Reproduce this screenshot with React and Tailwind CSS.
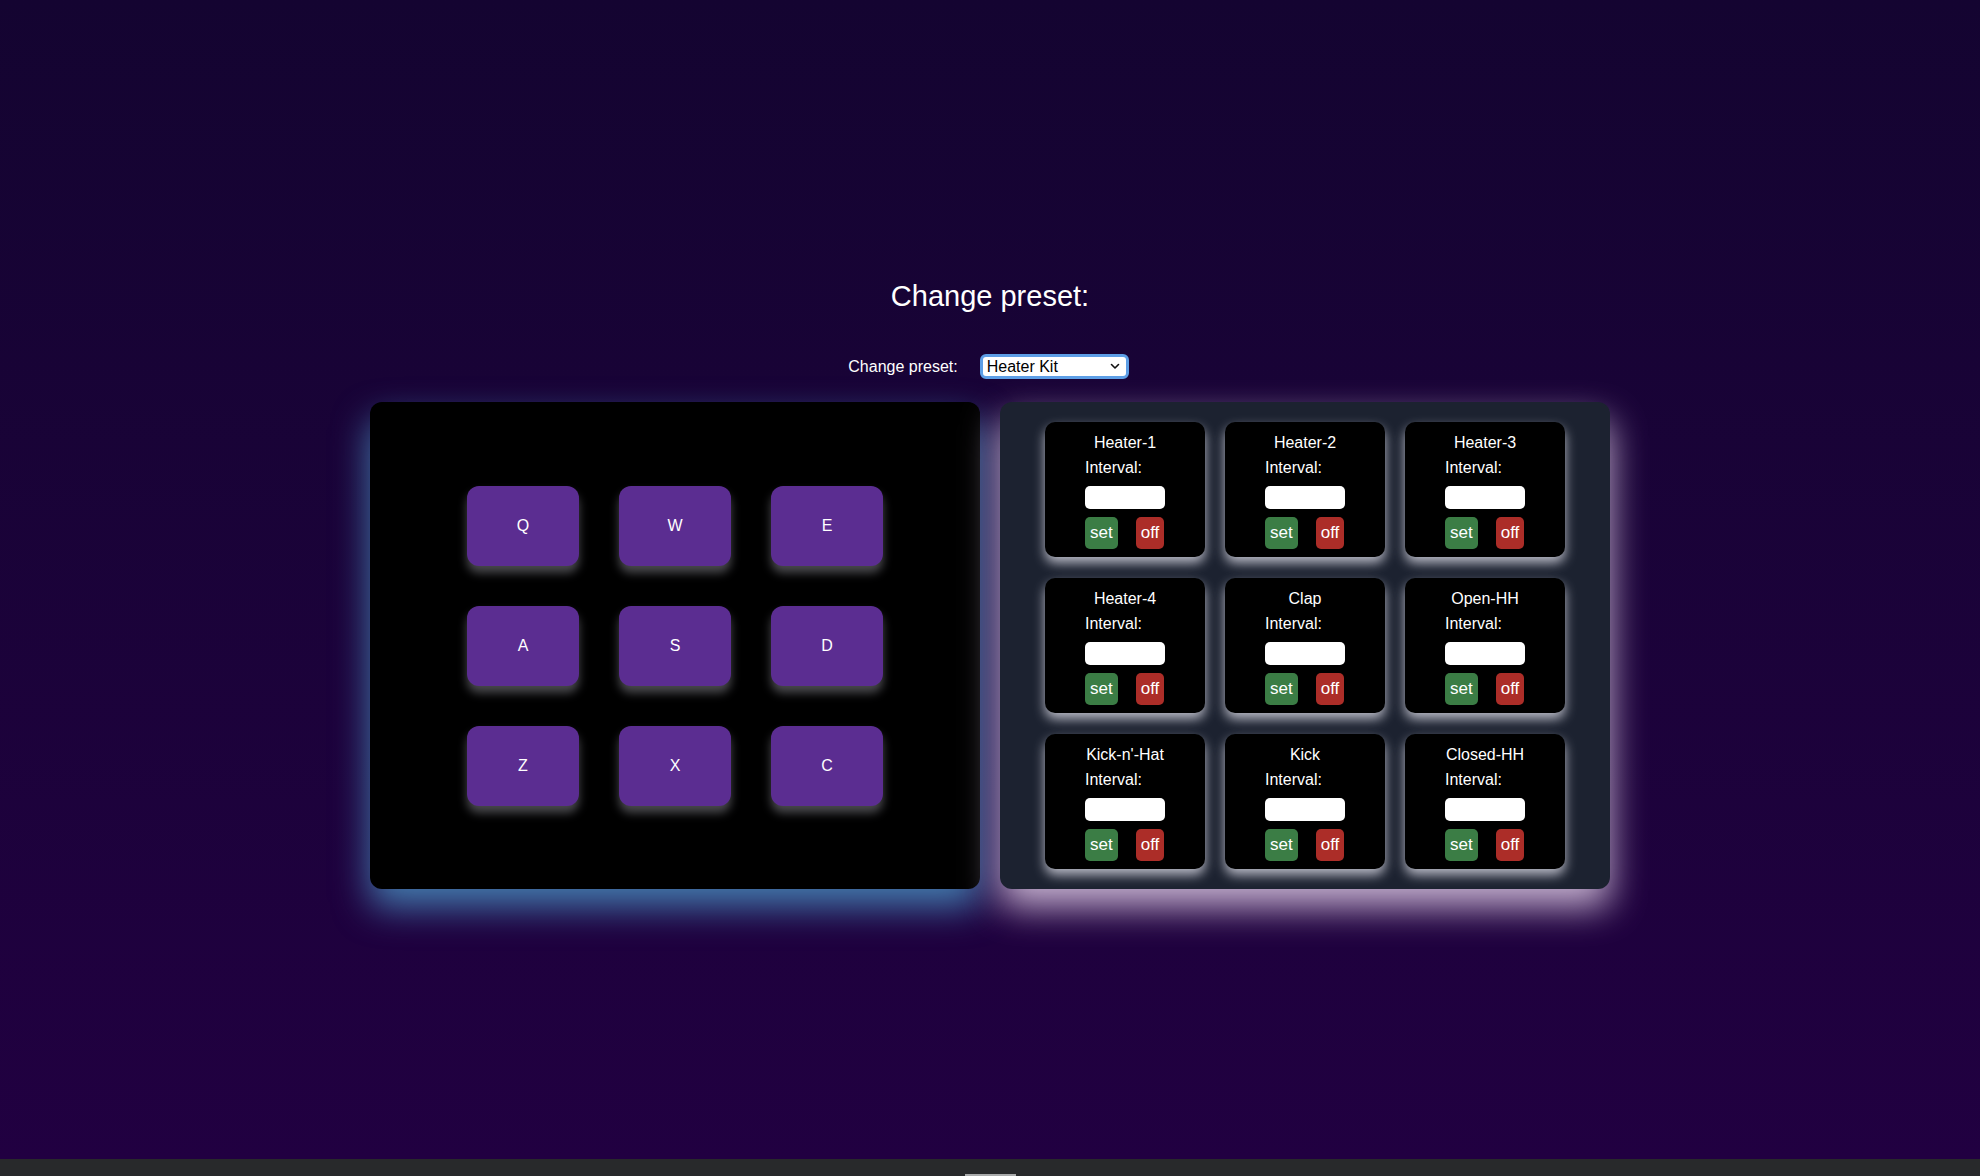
import React from 'react';

const keys = ['Q', 'W', 'E', 'A', 'S', 'D', 'Z', 'X', 'C'];

const pads = [
  'Heater-1', 'Heater-2', 'Heater-3',
  'Heater-4', 'Clap', 'Open-HH',
  "Kick-n'-Hat", 'Kick', 'Closed-HH',
];

const PadCard = ({ name }) => (
  <div className="w-[160px] h-[135px] bg-black rounded-[10px] pt-[11px] flex flex-col items-center shadow-[0_6px_12px_rgba(235,235,245,0.75)]">
    <div className="text-[16px] leading-[20px] text-white">{name}</div>
    <div className="w-[80px] flex flex-col">
      <div className="mt-[5px] text-[16px] leading-[20px] text-white">Interval:</div>
      <div className="mt-[8px] h-[23px] w-[80px] bg-white rounded-[5px]" />
      <div className="mt-[8px] flex gap-[18px]">
        <button className="px-[5px] py-[6px] text-[17px] leading-[20px] text-white bg-[#3b7d45] rounded-[5px]">set</button>
        <button className="px-[5px] py-[6px] text-[17px] leading-[20px] text-white bg-[#ac2d28] rounded-[5px]">off</button>
      </div>
    </div>
  </div>
);

const App = () => {
  return (
    <div className="w-[1980px] h-[1176px] flex flex-col overflow-hidden font-['Liberation_Sans',Arial,sans-serif]">
      <div className="h-[1159px] bg-linear-to-b from-[#140431] to-[#210041] flex flex-col items-center pt-[279px]">
        <h1 className="text-[29px] leading-[34px] text-white">Change preset:</h1>

        <div className="mt-[41px] flex items-center gap-[22px] ml-[-3px]">
          <span className="text-[16px] text-white">Change preset:</span>
          <div className="w-[149px] h-[25px] rounded-[6px] bg-white border-[3px] border-[#5d9ee6] flex items-center justify-between pl-[4px] pr-[6px]">
            <span className="text-[16px] leading-[18px] text-black">Heater Kit</span>
            <svg width="10" height="7" viewBox="0 0 10 7" fill="none">
              <path d="M1.5 1.5 L5 5 L8.5 1.5" stroke="#111" strokeWidth="1.6" strokeLinecap="round" strokeLinejoin="round" />
            </svg>
          </div>
        </div>

        <div className="mt-[23px] flex gap-[20px]">
          {/* Drum pads */}
          <div className="w-[610px] h-[487px] bg-black rounded-[12px] flex items-center justify-center shadow-[0_18px_36px_rgba(70,130,180,0.95)]">
            <div className="grid grid-cols-[repeat(3,112px)] gap-[40px]">
              {keys.map(k => (
                <button key={k} className="h-[80px] rounded-[12px] bg-[#5b2d91] text-white text-[16px] shadow-[0_7px_10px_rgba(210,210,220,0.35)]">
                  {k}
                </button>
              ))}
            </div>
          </div>

          {/* Interval controls */}
          <div className="w-[610px] h-[487px] bg-[#1c2230] rounded-[12px] flex justify-center pt-[20px] shadow-[0_18px_36px_rgba(216,196,224,0.9)]">
            <div className="grid grid-cols-[repeat(3,160px)] gap-x-[20px] gap-y-[21px] content-start">
              {pads.map(p => <PadCard key={p} name={p} />)}
            </div>
          </div>
        </div>
      </div>
      <div className="h-[17px] bg-[#28292b] flex justify-center items-end">
        <div className="w-[51px] h-[2px] bg-[#a9aaab] ml-[1px]" />
      </div>
    </div>
  );
};

export default App;
